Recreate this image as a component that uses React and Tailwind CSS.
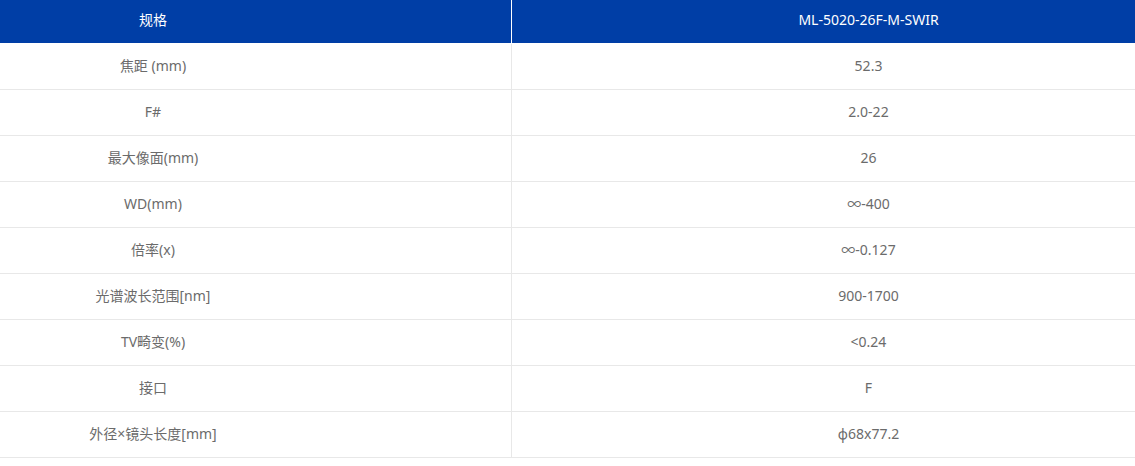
const specs = [
  ['焦距 (mm)', '52.3'],
  ['F#', '2.0-22'],
  ['最大像面(mm)', '26'],
  ['WD(mm)', '∞-400'],
  ['倍率(x)', '∞-0.127'],
  ['光谱波长范围[nm]', '900-1700'],
  ['TV畸变(%)', '<0.24'],
  ['接口', 'F'],
  ['外径×镜头长度[mm]', 'φ68x77.2'],
]

export default function App() {
  return (
    <div className="w-full overflow-hidden bg-white font-['Noto_Sans','Noto_Sans_CJK_SC',sans-serif] text-[14px]">
      <div className="w-[1430px] ml-[-205px]">
        <div className="grid grid-cols-[716px_1fr] h-[43px] bg-[#003ea6] text-white">
          <div className="flex items-center justify-center pb-[4px]">规格</div>
          <div className="flex items-center justify-center pb-[4px] border-l border-white">ML-5020-26F-M-SWIR</div>
        </div>
        <div className="border-t border-white">
          {specs.map(([k, v]) => (
            <div key={k} className="grid grid-cols-[716px_1fr] h-[46px] border-b border-[#e8e8e8] text-[#6b6b6b]">
              <div className="flex items-center justify-center pb-[3px]">{k}</div>
              <div className="flex items-center justify-center pb-[3px] border-l border-[#e8e8e8]">{v}</div>
            </div>
          ))}
        </div>
        <div className="h-[8px]" />
      </div>
    </div>
  )
}
